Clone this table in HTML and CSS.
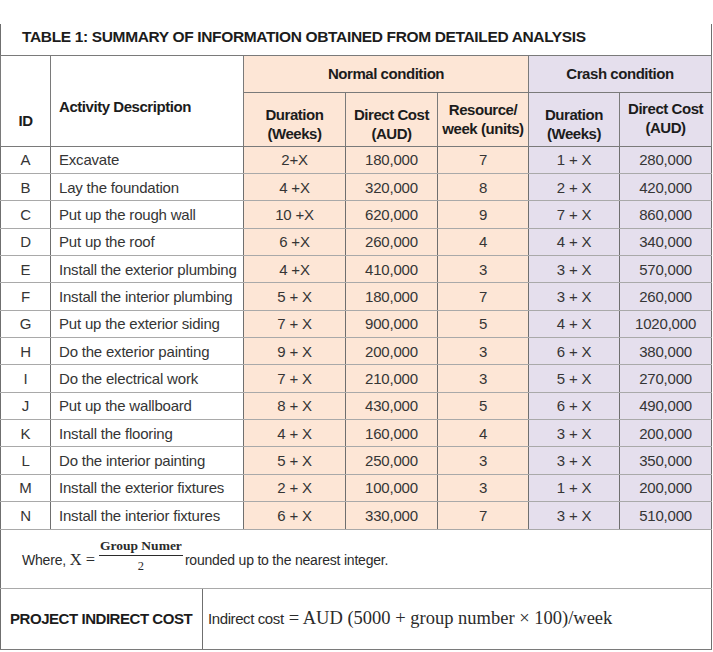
FILE: index.html
```html
<!DOCTYPE html>
<html lang="en">
<head>
<meta charset="utf-8">
<title>Table 1</title>
<link rel="stylesheet" href="styles.css">
</head>
<body>
<table class="summary">
  <colgroup>
    <col class="c-id">
    <col class="c-desc">
    <col class="c-n1">
    <col class="c-n2">
    <col class="c-n3">
    <col class="c-c1">
    <col class="c-c2">
  </colgroup>
  <tr class="r-title">
    <td colspan="7" class="title">TABLE 1: SUMMARY OF INFORMATION OBTAINED FROM DETAILED ANALYSIS</td>
  </tr>
  <tr class="r-group">
    <th rowspan="2" class="h-id">ID</th>
    <th rowspan="2" class="h-desc">Activity Description</th>
    <th colspan="3" class="normal h-group">Normal condition</th>
    <th colspan="2" class="crash h-group">Crash condition</th>
  </tr>
  <tr class="r-head">
    <th class="normal h-col">Duration<br>(Weeks)</th>
    <th class="normal h-col">Direct Cost<br>(AUD)</th>
    <th class="normal h-col h-res">Resource/<br>week (units)</th>
    <th class="crash h-col">Duration<br>(Weeks)</th>
    <th class="crash h-col h-dc">Direct Cost<br>(AUD)</th>
  </tr>
  <tr class="r-data"><td class="id">A</td><td class="desc">Excavate</td><td class="normal">2+X</td><td class="normal">180,000</td><td class="normal">7</td><td class="crash">1 + X</td><td class="crash">280,000</td></tr>
  <tr class="r-data"><td class="id">B</td><td class="desc">Lay the foundation</td><td class="normal">4 +X</td><td class="normal">320,000</td><td class="normal">8</td><td class="crash">2 + X</td><td class="crash">420,000</td></tr>
  <tr class="r-data"><td class="id">C</td><td class="desc">Put up the rough wall</td><td class="normal">10 +X</td><td class="normal">620,000</td><td class="normal">9</td><td class="crash">7 + X</td><td class="crash">860,000</td></tr>
  <tr class="r-data"><td class="id">D</td><td class="desc">Put up the roof</td><td class="normal">6 +X</td><td class="normal">260,000</td><td class="normal">4</td><td class="crash">4 + X</td><td class="crash">340,000</td></tr>
  <tr class="r-data"><td class="id">E</td><td class="desc">Install the exterior plumbing</td><td class="normal">4 +X</td><td class="normal">410,000</td><td class="normal">3</td><td class="crash">3 + X</td><td class="crash">570,000</td></tr>
  <tr class="r-data"><td class="id">F</td><td class="desc">Install the interior plumbing</td><td class="normal">5 + X</td><td class="normal">180,000</td><td class="normal">7</td><td class="crash">3 + X</td><td class="crash">260,000</td></tr>
  <tr class="r-data"><td class="id">G</td><td class="desc">Put up the exterior siding</td><td class="normal">7 + X</td><td class="normal">900,000</td><td class="normal">5</td><td class="crash">4 + X</td><td class="crash">1020,000</td></tr>
  <tr class="r-data"><td class="id">H</td><td class="desc">Do the exterior painting</td><td class="normal">9 + X</td><td class="normal">200,000</td><td class="normal">3</td><td class="crash">6 + X</td><td class="crash">380,000</td></tr>
  <tr class="r-data"><td class="id">I</td><td class="desc">Do the electrical work</td><td class="normal">7 + X</td><td class="normal">210,000</td><td class="normal">3</td><td class="crash">5 + X</td><td class="crash">270,000</td></tr>
  <tr class="r-data"><td class="id">J</td><td class="desc">Put up the wallboard</td><td class="normal">8 + X</td><td class="normal">430,000</td><td class="normal">5</td><td class="crash">6 + X</td><td class="crash">490,000</td></tr>
  <tr class="r-data"><td class="id">K</td><td class="desc">Install the flooring</td><td class="normal">4 + X</td><td class="normal">160,000</td><td class="normal">4</td><td class="crash">3 + X</td><td class="crash">200,000</td></tr>
  <tr class="r-data"><td class="id">L</td><td class="desc">Do the interior painting</td><td class="normal">5 + X</td><td class="normal">250,000</td><td class="normal">3</td><td class="crash">3 + X</td><td class="crash">350,000</td></tr>
  <tr class="r-data"><td class="id">M</td><td class="desc">Install the exterior fixtures</td><td class="normal">2 + X</td><td class="normal">100,000</td><td class="normal">3</td><td class="crash">1 + X</td><td class="crash">200,000</td></tr>
  <tr class="r-data"><td class="id">N</td><td class="desc">Install the interior fixtures</td><td class="normal">6 + X</td><td class="normal">330,000</td><td class="normal">7</td><td class="crash">3 + X</td><td class="crash">510,000</td></tr>
  <tr class="r-where">
    <td colspan="7" class="where">
      <div class="where-line">
        <span class="where-lead">Where, <span class="math">X =</span></span>
        <span class="frac"><span class="num">Group Numer</span><span class="den">2</span></span>
        <span class="where-tail">rounded up to the nearest integer.</span>
      </div>
    </td>
  </tr>
  <tr class="r-indirect">
    <td colspan="7" class="indirect">
      <div class="ind-row">
        <div class="ind-label">PROJECT INDIRECT COST</div>
        <div class="ind-value"><span class="ind-sans">Indirect cost</span> <span class="math">= AUD (5000 + group number × 100)/week</span></div>
      </div>
    </td>
  </tr>
</table>
</body>
</html>
```

FILE: styles.css
```css
html, body {
  margin: 0;
  padding: 0;
  background: #ffffff;
}
body {
  padding-top: 24px;
  font-family: "Liberation Sans", Arial, sans-serif;
  color: #333333;
}
.summary {
  border-collapse: collapse;
  table-layout: fixed;
  width: 711px;
}
.c-id { width: 50px; }
.c-desc { width: 193px; }
.c-n1 { width: 102px; }
.c-n2 { width: 92px; }
.c-n3 { width: 91px; }
.c-c1 { width: 91px; }
.c-c2 { width: 92px; }

.summary td, .summary th {
  border: 1px solid #a9a9a9;
  border-left-color: #6f6f6f;
  border-right-color: #6f6f6f;
  padding: 0;
}
.summary .normal { background: #fde6d6; }
.summary .crash { background: #e5dfed; }

/* title */
.r-title { height: 31px; }
.summary td.title {
  border-top: none;
  border-bottom-color: #7a7a7a;
  font-weight: bold;
  font-size: 15.5px;
  letter-spacing: -0.35px;
  color: #1c1c1c;
  padding-left: 21px;
  padding-bottom: 4px;
  vertical-align: middle;
}

/* headers */
.r-group { height: 37px; }
.r-head { height: 54px; }
.summary th {
  font-weight: bold;
  font-size: 15px;
  letter-spacing: -0.45px;
  color: #1c1c1c;
  line-height: 19.5px;
  border-color: #7a7a7a;
}
.summary th.h-id {
  vertical-align: top;
  padding-top: 55px;
  text-align: center;
}
.summary th.h-desc {
  vertical-align: top;
  padding-top: 41px;
  text-align: left;
  padding-left: 8px;
}
.summary th.h-group { vertical-align: middle; padding-top: 1px; }
.summary th.h-col {
  vertical-align: bottom;
  padding-bottom: 2px;
}
.summary th.h-res { padding-bottom: 7px; }
.summary th.h-dc { padding-bottom: 8px; }

/* data */
.r-data { height: 27.36px; }
.summary .r-data td {
  font-size: 15px;
  letter-spacing: -0.2px;
  text-align: center;
  vertical-align: middle;
  color: #353535;
  white-space: nowrap;
}
.summary .r-data td.desc {
  text-align: left;
  padding-left: 8px;
}

/* where row */
.r-where { height: 59px; }
.summary td.where {
  padding-left: 21px;
  font-size: 14px;
  letter-spacing: -0.2px;
  color: #2b2b2b;
  vertical-align: middle;
  border-bottom-color: #a9a9a9;
}
.where-line {
  display: flex;
  align-items: center;
  gap: 2px;
}
.where-lead, .where-tail { padding-top: 3px; }
.math {
  font-family: "Liberation Serif", "DejaVu Serif", serif;
  letter-spacing: 0;
}
.where-lead .math { font-size: 16.5px; }
.frac {
  display: inline-flex;
  flex-direction: column;
  align-items: center;
  font-family: "Liberation Serif", "DejaVu Serif", serif;
  font-size: 13.5px;
  letter-spacing: 0;
  line-height: 14px;
  margin-top: -6px;
  margin-left: 2px;
}
.num {
  font-weight: bold;
  border-bottom: 1px solid #2b2b2b;
  padding: 0 1px 2px;
}
.den { padding-top: 3px; font-size: 12.5px; }

/* indirect row */
.r-indirect { height: 61px; }
.summary td.indirect {
  border-bottom-color: #7a7a7a;
  vertical-align: top;
}
.ind-row {
  display: flex;
  height: 60px;
}
.ind-label {
  width: 192px;
  flex: none;
  padding-left: 9px;
  border-right: 1px solid #6f6f6f;
  display: flex;
  align-items: center;
  font-weight: bold;
  font-size: 15px;
  letter-spacing: -0.45px;
  color: #1c1c1c;
}
.ind-value {
  display: flex;
  align-items: center;
  padding-left: 5px;
  gap: 5px;
  color: #2b2b2b;
}
.ind-sans {
  font-size: 15px;
  letter-spacing: -0.4px;
}
.ind-value .math { font-size: 18.5px; }
```
